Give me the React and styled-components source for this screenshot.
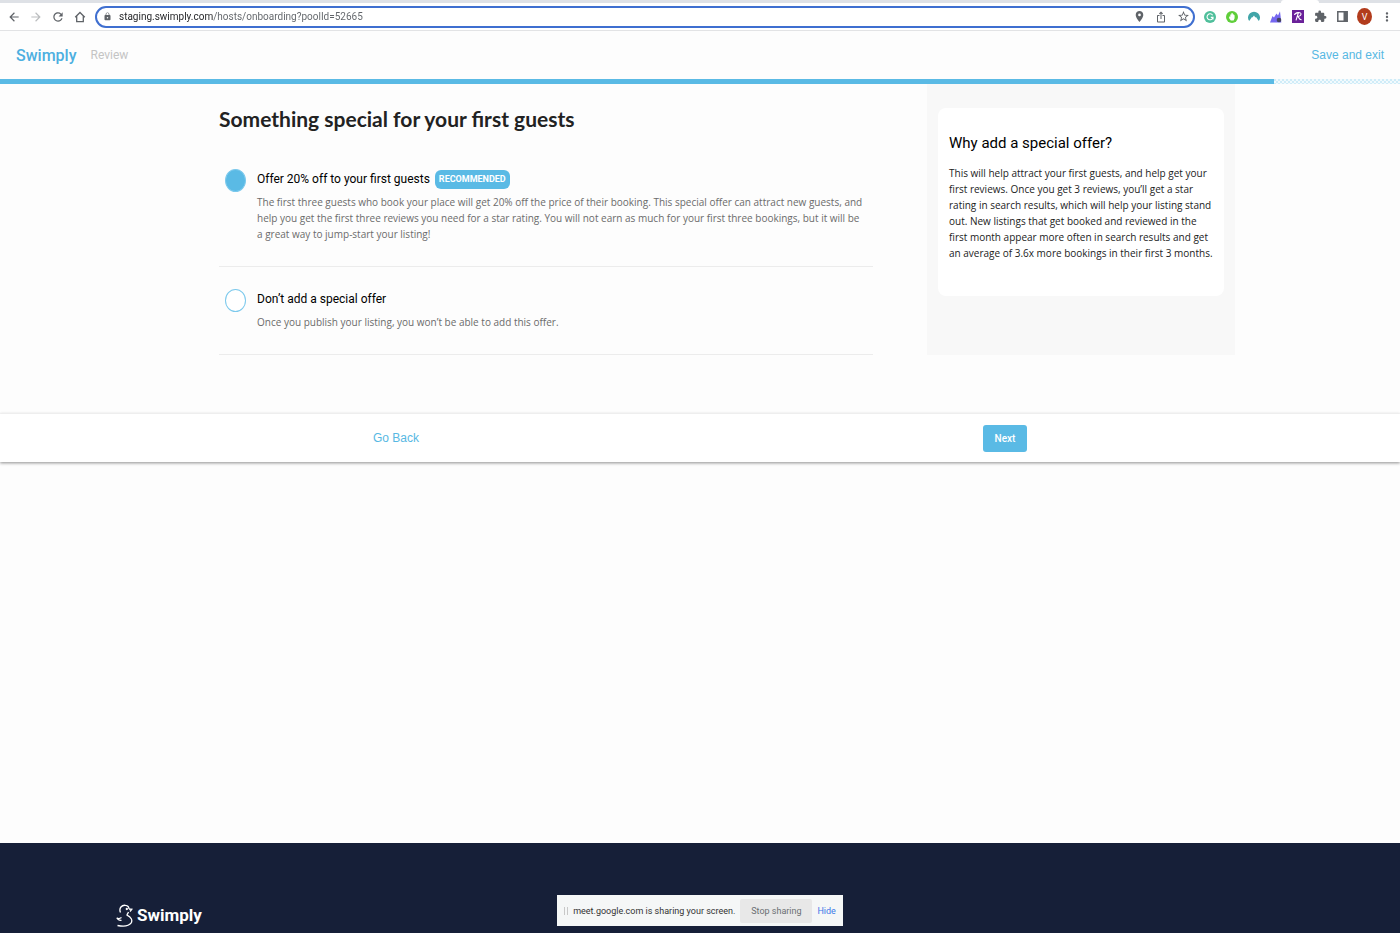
import React, { useState } from "react";
import styled, { createGlobalStyle } from "styled-components";
import {
  MdArrowBack,
  MdArrowForward,
  MdRefresh,
  MdLock,
  MdLocationOn,
  MdIosShare,
  MdStarBorder,
  MdExtension,
  MdMoreVert,
} from "react-icons/md";

const GlobalStyle = createGlobalStyle`
  * {
    box-sizing: border-box;
  }
  body {
    margin: 0;
    background: #fdfdfd;
    font-family: Roboto, "Liberation Sans", sans-serif;
    color: #000;
  }
  button, input {
    font-family: inherit;
  }
`;

const Page = styled.div`
  min-height: 100vh;
  display: flex;
  flex-direction: column;
`;

const TabStrip = styled.div`
  height: 3px;
  display: flex;
  justify-content: flex-end;
  background: #dee1e6;
`;

const ActiveTab = styled.div`
  width: 38px;
  margin-right: 81px;
  background: #fff;
  border-radius: 3px 3px 0 0;
`;

const Toolbar = styled.div`
  height: 28px;
  display: flex;
  align-items: center;
  gap: 8px;
  padding: 0 6px 0 7px;
  background: #fff;
  border-bottom: 1px solid #e2e3e5;
`;

const IconButton = styled.button`
  width: 14px;
  height: 14px;
  flex: none;
  display: flex;
  align-items: center;
  justify-content: center;
  padding: 0;
  border: 0;
  background: none;
  color: ${(props) => props.$color || "#5f6368"};
  cursor: pointer;

  svg {
    flex: none;
  }
`;

const AddressBar = styled.form`
  flex: 1;
  height: 22px;
  display: flex;
  align-items: center;
  gap: 7px;
  padding: 0 3px 0 6px;
  border: 2px solid #3f6fd0;
  border-radius: 11px;
  background: #fff;
  color: #5f6368;
`;

const UrlInput = styled.input`
  flex: 1;
  min-width: 0;
  padding: 0;
  border: 0;
  outline: 0;
  font-size: 10px;
  color: transparent;
  background: linear-gradient(90deg, #202124 94px, #5f6368 94px);
  background-clip: text;
  caret-color: #202124;
`;

const Tools = styled.div`
  display: flex;
  align-items: center;
  gap: 8px;
`;

const Avatar = styled.button`
  width: 15px;
  height: 17px;
  padding: 0;
  border: 0;
  border-radius: 50%;
  background: #b23c1c;
  color: #fff;
  font-size: 9px;
`;

const Header = styled.header`
  height: 48px;
  display: flex;
  align-items: center;
  gap: 14px;
  padding: 0 16px;
`;

const Brand = styled.a`
  font-size: 16px;
  font-weight: 500;
  color: #4dafe0;
  text-decoration: none;
`;

const Step = styled.span`
  flex: 1;
  font-size: 12px;
  color: #c4c4c4;
`;

const TextButton = styled.button`
  padding: 0;
  border: 0;
  background: none;
  font-family: "Liberation Sans", Arial, sans-serif;
  font-size: 12px;
  color: #57b8e3;
  cursor: pointer;
`;

const Progress = styled.div`
  height: 5px;
  background: conic-gradient(#cfecf8 25%, #f2fafd 0 50%, #cfecf8 0 75%, #f2fafd 0) 0 0 / 4px 4px;
`;

const ProgressFill = styled.div`
  height: 100%;
  background: #5abae5;
`;

const Content = styled.main`
  display: grid;
  grid-template-columns: 654fr 308fr;
  gap: 54px;
  padding: 0 165px 0 219px;
`;

const Title = styled.h1`
  margin: 0;
  padding: 21px 0 35px;
  font-family: Lato, sans-serif;
  font-size: 21px;
  line-height: 28px;
  font-weight: 700;
  color: #222;
`;

const Option = styled.div`
  display: grid;
  grid-template-columns: 21px 1fr;
  column-gap: 11px;
  padding: ${(props) => (props.$first ? "0 0 24px 6px" : "21px 0 24px 6px")};
  border-bottom: 1px solid #ececec;
`;

const Radio = styled.input`
  appearance: none;
  width: 21px;
  height: 23px;
  margin: 1px 0 0;
  border: 1px solid #7cc9ec;
  border-radius: 50%;
  background: ${(props) => (props.checked ? "#5abae5" : "#fff")};
`;

const OptionLabel = styled.label`
  display: flex;
  align-items: center;
  gap: 5px;
  height: 22px;
  font-size: 12px;
`;

const Badge = styled.span`
  padding: 0 4px;
  border-radius: 6px;
  background: #5abae5;
  color: #fff;
  font-size: 9px;
  line-height: 19px;
  font-weight: 700;
`;

const OptionText = styled.p`
  margin: 4px 0 0;
  font-family: "Open Sans", sans-serif;
  font-size: 10px;
  line-height: 16px;
  color: #6b6b6b;
`;

const Aside = styled.aside`
  padding: 24px 11px 59px;
  background: #f8f8f8;
`;

const Card = styled.section`
  height: 100%;
  padding: 24px 11px;
  border-radius: 8px;
  background: #fff;
`;

const CardTitle = styled.h2`
  margin: 0 0 11px;
  font-size: 15px;
  line-height: 22px;
  font-weight: 400;
`;

const CardText = styled.p`
  margin: 0;
  font-family: "Open Sans", sans-serif;
  font-size: 10px;
  line-height: 16px;
  color: #222;
`;

const Actions = styled.nav`
  height: 48px;
  margin-top: 59px;
  display: flex;
  align-items: center;
  justify-content: space-between;
  padding: 0 373px;
  background: #fff;
  box-shadow: 0 -1px 2px #f0f0f0, 0 1px 3px #888;
`;

const NextButton = styled.button`
  width: 44px;
  height: 27px;
  padding: 0;
  border: 0;
  border-radius: 3px;
  background: #5abae5;
  color: #fff;
  font-size: 10px;
  font-weight: 500;
  cursor: pointer;
`;

const Footer = styled.footer`
  height: 90px;
  margin-top: auto;
  padding: 59px 116px 0;
  background: #161f38;
`;

const FooterLogo = styled.a`
  display: flex;
  align-items: center;
  gap: 4px;
  font-size: 17px;
  line-height: 26px;
  font-weight: 700;
  color: #fff;
  text-decoration: none;
`;

const ShareLayer = styled.div`
  position: fixed;
  left: 0;
  right: 0;
  bottom: 7px;
  display: flex;
  justify-content: center;
`;

const ShareBar = styled.div`
  height: 31px;
  display: flex;
  align-items: center;
  padding: 0 7px;
  gap: 5px;
  background: #f5f7f7;
  font-size: 9px;
  color: #333;
  white-space: nowrap;
`;

const Grip = styled.span`
  width: 4px;
  height: 8px;
  border: solid #c8c8c8;
  border-width: 0 1px;
`;

const StopButton = styled.button`
  width: 72px;
  height: 24px;
  padding: 0;
  border: 0;
  border-radius: 2px;
  background: #e8e8e8;
  color: #6b6f73;
  font-size: 9px;
`;

const HideButton = styled.button`
  padding: 0;
  border: 0;
  background: none;
  color: #3c78e8;
  font-size: 9px;
`;

const Extensions = () => (
  <Tools>
    <IconButton aria-label="Grammarly">
      <svg width="12" height="12" viewBox="0 0 12 12">
        <circle cx="6" cy="6" r="6" fill="#4fbf9b" />
        <path d="M8.6 4.2A3 3 0 1 0 9 6.4H6.8M9 6.4V8.4" fill="none" stroke="#fff" strokeWidth="1.1" />
      </svg>
    </IconButton>
    <IconButton aria-label="Blocker">
      <svg width="12" height="12" viewBox="0 0 12 12">
        <circle cx="6" cy="6" r="6" fill="#5fce3a" />
        <path d="M3 5.500l1.300.3V3.600l1-.2.3-1.400h1l.2 1.200 1 .4.8 1V7.200L7.600 9.400H4.800L3.300 7.500z" fill="#fff" />
      </svg>
    </IconButton>
    <IconButton aria-label="Nord">
      <svg width="12" height="12" viewBox="0 0 12 12">
        <path d="M1.200 10A6 5.800 0 1 1 10.800 10L8 5.900 7.300 6.500 6 4.600 4.400 6.500 4 5.900z" fill="#41a5a8" />
      </svg>
    </IconButton>
    <IconButton aria-label="Peaks">
      <svg width="12" height="12" viewBox="0 0 12 12">
        <path d="M0 11.500L2.500 5 4 6.500 6.500 2.500 8 4.500 10 .3 11.300 11.500z" fill="#7567f0" />
        <circle cx="9" cy="9" r="2.300" fill="#444461" />
      </svg>
    </IconButton>
    <IconButton aria-label="Rakuten">
      <svg width="12" height="13" viewBox="0 0 12 13">
        <rect width="12" height="13" fill="#6a2199" />
        <path d="M2.500 5C3 2.500 9.500 1.500 9 4.300 8.600 6 6 6.500 5 6.400M6.300 3L4 10.300M5.600 6.500C7.500 7 6.500 10 9.500 9.600" fill="none" stroke="#fff" strokeWidth="1.100" />
      </svg>
    </IconButton>
    <IconButton aria-label="Extensions">
      <MdExtension size={13} />
    </IconButton>
    <IconButton aria-label="Side panel">
      <svg width="11" height="11" viewBox="0 0 11 11">
        <path d="M.8.8h9.400v9.400H.8z" fill="none" stroke="#5f6368" strokeWidth="1.500" />
        <path d="M6.500 1h3.500v9H6.500z" fill="#5f6368" />
      </svg>
    </IconButton>
    <Avatar aria-label="Profile">V</Avatar>
    <IconButton aria-label="More">
      <MdMoreVert size={14} />
    </IconButton>
  </Tools>
);

const HomeIcon = () => (
  <svg width="12" height="12" viewBox="0 0 12 12" fill="none" stroke="#5f6368" strokeWidth="1.300">
    <path d="M1.200 6.300L6 1.500l4.800 4.800M2.700 5v5.700h6.600V5" />
  </svg>
);

const Duck = () => (
  <svg width="17" height="23" viewBox="0 0 17 23" fill="none" stroke="#fff" strokeWidth="1.300">
    <path d="M4.500 8.500C2.500 4 6 .8 9.500 1.300c2.500.3 3.500 2 3.500 3.700M13 5l2.800.3-1.800 2.200M12.500 8c-.5 1.500-1.500 2.200-1.500 3.200 4 1.800 6 5 4 8-2.500 3.500-8 3.200-13.500 2.300" />
    <path d="M.8 13.800c1 2 2.700 2.800 4.700 2.600M1 14.200c1.500.6 3 .4 4.500-.7" />
    <circle cx="10.800" cy="5" r=".5" fill="#fff" />
  </svg>
);

const App = () => {
  const [offer, setOffer] = useState("discount");
  const [url, setUrl] = useState("staging.swimply.com/hosts/onboarding?poolId=52665");
  const progress = 91;

  return (
    <Page>
      <GlobalStyle />
      <TabStrip>
        <ActiveTab />
      </TabStrip>
      <Toolbar>
        <IconButton aria-label="Back"><MdArrowBack size={14} /></IconButton>
        <IconButton aria-label="Forward" $color="#bbbdbf"><MdArrowForward size={14} /></IconButton>
        <IconButton aria-label="Reload"><MdRefresh size={14} /></IconButton>
        <IconButton aria-label="Home"><HomeIcon /></IconButton>
        <AddressBar onSubmit={(e) => e.preventDefault()}>
          <MdLock size={9} />
          <UrlInput aria-label="Address" value={url} onChange={(e) => setUrl(e.target.value)} />
          <Tools>
            <IconButton type="button" aria-label="Location"><MdLocationOn size={13} /></IconButton>
            <IconButton type="button" aria-label="Share"><MdIosShare size={12} /></IconButton>
            <IconButton type="button" aria-label="Bookmark"><MdStarBorder size={13} /></IconButton>
          </Tools>
        </AddressBar>
        <Extensions />
      </Toolbar>
      <Header>
        <Brand href="#">Swimply</Brand>
        <Step>Review</Step>
        <TextButton>Save and exit</TextButton>
      </Header>
      <Progress>
        <ProgressFill style={{ width: `${progress}%` }} />
      </Progress>
      <Content>
        <div>
          <Title>Something special for your first guests</Title>
          <Option $first>
            <Radio
              type="radio"
              name="offer"
              id="discount"
              checked={offer === "discount"}
              onChange={() => setOffer("discount")}
            />
            <div>
              <OptionLabel htmlFor="discount">
                Offer 20% off to your first guests <Badge>RECOMMENDED</Badge>
              </OptionLabel>
              <OptionText>
                The first three guests who book your place will get 20% off the price of their booking. This
                special offer can attract new guests, and help you get the first three reviews you need for a
                star rating. You will not earn as much for your first three bookings, but it will be a&nbsp;great
                way to jump-start your listing!
              </OptionText>
            </div>
          </Option>
          <Option>
            <Radio
              type="radio"
              name="offer"
              id="none"
              checked={offer === "none"}
              onChange={() => setOffer("none")}
            />
            <div>
              <OptionLabel htmlFor="none">Don’t add a special offer</OptionLabel>
              <OptionText>Once you publish your listing, you won’t be able to add this offer.</OptionText>
            </div>
          </Option>
        </div>
        <Aside>
          <Card>
            <CardTitle>Why add a special offer?</CardTitle>
            <CardText>
              This will help attract your first guests, and help get your first reviews. Once you get 3 reviews,
              you’ll get a star rating in search results, which will help your listing stand out. New listings
              that get booked and reviewed in the first month appear more often in search results and get an
              average of 3.6x more bookings in their first 3 months.
            </CardText>
          </Card>
        </Aside>
      </Content>
      <Actions>
        <TextButton>Go Back</TextButton>
        <NextButton>Next</NextButton>
      </Actions>
      <Footer>
        <FooterLogo href="#">
          <Duck />
          Swimply
        </FooterLogo>
      </Footer>
      <ShareLayer>
        <ShareBar>
          <Grip />
          <span>meet.google.com is sharing your screen.</span>
          <StopButton>Stop sharing</StopButton>
          <HideButton>Hide</HideButton>
        </ShareBar>
      </ShareLayer>
    </Page>
  );
};

export default App;
